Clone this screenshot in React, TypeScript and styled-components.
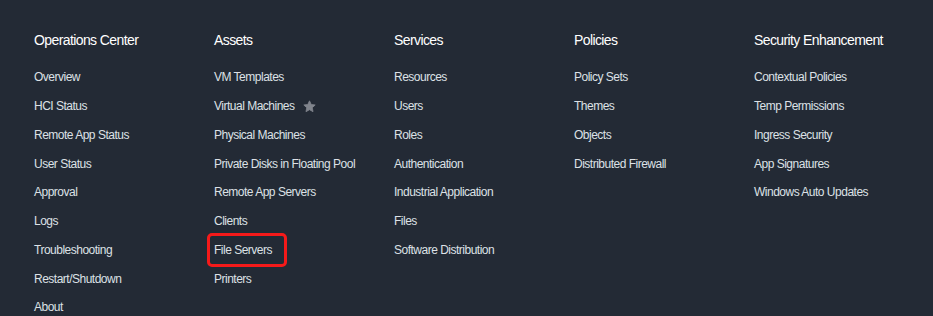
import React from "react";
import styled, { createGlobalStyle } from "styled-components";

const Global = createGlobalStyle`
  html, body { margin: 0; padding: 0; background: #232a35; }
  body { font-family: "Liberation Sans", Arial, sans-serif; }
`;

const Page = styled.div`
  width: 933px;
  height: 316px;
  background: #232a35;
  box-sizing: border-box;
  padding: 30px 0 0 34px;
  display: grid;
  grid-template-columns: repeat(5, 180px);
  overflow: hidden;
`;

const Column = styled.div`
  display: flex;
  flex-direction: column;
`;

const Heading = styled.div`
  color: #ffffff;
  font-size: 14px;
  letter-spacing: -0.6px;
  line-height: 20px;
  height: 20px;
  margin-bottom: 13px;
`;

const Item = styled.div<{ $highlight?: boolean }>`
  position: relative;
  display: flex;
  align-items: center;
  gap: 8px;
  height: 28.75px;
  color: #dde1e6;
  font-size: 12px;
  letter-spacing: -0.5px;
  ${(p) =>
    p.$highlight &&
    `
    &::after {
      content: "";
      position: absolute;
      left: -7px;
      top: -2.5px;
      width: 80px;
      height: 34px;
      box-sizing: border-box;
      border: 3px solid #f51a1a;
      border-radius: 5px;
    }
  `}
`;

const Star = () => (
  <svg width="13" height="13" viewBox="0 0 24 24">
    <path
      d="M12 1.5l3.2 6.8 7.3.9-5.4 5 1.4 7.3L12 17.9l-6.5 3.6 1.4-7.3-5.4-5 7.3-.9z"
      fill="#80848c"
      stroke="#80848c"
      strokeWidth="1.5"
      strokeLinejoin="round"
    />
  </svg>
);

type Entry = { label: string; star?: boolean; highlight?: boolean };

const columns: { title: string; items: Entry[] }[] = [
  {
    title: "Operations Center",
    items: [
      { label: "Overview" },
      { label: "HCI Status" },
      { label: "Remote App Status" },
      { label: "User Status" },
      { label: "Approval" },
      { label: "Logs" },
      { label: "Troubleshooting" },
      { label: "Restart/Shutdown" },
      { label: "About" },
    ],
  },
  {
    title: "Assets",
    items: [
      { label: "VM Templates" },
      { label: "Virtual Machines", star: true },
      { label: "Physical Machines" },
      { label: "Private Disks in Floating Pool" },
      { label: "Remote App Servers" },
      { label: "Clients" },
      { label: "File Servers", highlight: true },
      { label: "Printers" },
    ],
  },
  {
    title: "Services",
    items: [
      { label: "Resources" },
      { label: "Users" },
      { label: "Roles" },
      { label: "Authentication" },
      { label: "Industrial Application" },
      { label: "Files" },
      { label: "Software Distribution" },
    ],
  },
  {
    title: "Policies",
    items: [
      { label: "Policy Sets" },
      { label: "Themes" },
      { label: "Objects" },
      { label: "Distributed Firewall" },
    ],
  },
  {
    title: "Security Enhancement",
    items: [
      { label: "Contextual Policies" },
      { label: "Temp Permissions" },
      { label: "Ingress Security" },
      { label: "App Signatures" },
      { label: "Windows Auto Updates" },
    ],
  },
];

export default function App() {
  return (
    <>
      <Global />
      <Page>
        {columns.map((c) => (
          <Column key={c.title}>
            <Heading>{c.title}</Heading>
            {c.items.map((it) => (
              <Item key={it.label} $highlight={it.highlight}>
                <span>{it.label}</span>
                {it.star && <Star />}
              </Item>
            ))}
          </Column>
        ))}
      </Page>
    </>
  );
}
